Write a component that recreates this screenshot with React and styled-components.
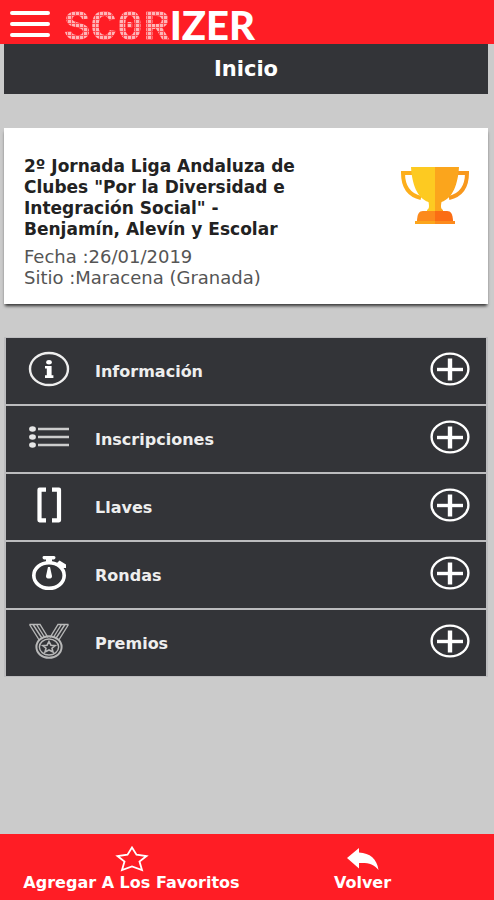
import styled, { createGlobalStyle } from "styled-components";

const menuItems = [
  { id: 1, name: "Información", icon: InfoIcon },
  { id: 2, name: "Inscripciones", icon: ListIcon },
  { id: 3, name: "Llaves", icon: BracketIcon },
  { id: 4, name: "Rondas", icon: WatchIcon },
  { id: 5, name: "Premios", icon: MedalIcon },
];

function App() {
  return (
    <Page>
      <GlobalStyle />
      <Header>
        <MenuButton type="button" aria-label="Menú">
          <svg width="40" height="28" viewBox="0 0 40 28" aria-hidden="true">
            <path
              d="M2 3H38M2 14H38M2 25H38"
              stroke="#fff"
              strokeWidth="4"
              strokeLinecap="round"
            />
          </svg>
        </MenuButton>
        <Logo>
          <LogoDots>SC0R</LogoDots>
          <LogoSolid>IZER</LogoSolid>
        </Logo>
      </Header>
      <Main>
        <Title>Inicio</Title>
        <Card>
          <div>
            <EventName>
              2º Jornada Liga Andaluza de Clubes "Por la Diversidad e
              Integración Social" - Benjamín, Alevín y Escolar
            </EventName>
            <EventInfo>Fecha :26/01/2019</EventInfo>
            <EventInfo>Sitio :Maracena (Granada)</EventInfo>
          </div>
          <TrophyIcon />
        </Card>
        <Menu>
          {menuItems.map((el) => (
            <li key={el.id}>
              <MenuRow type="button">
                <el.icon />
                <MenuName>{el.name}</MenuName>
                <PlusIcon />
              </MenuRow>
            </li>
          ))}
        </Menu>
      </Main>
      <Footer>
        <FooterButton type="button">
          <StarIcon />
          Agregar A Los Favoritos
        </FooterButton>
        <FooterButton type="button">
          <BackIcon />
          Volver
        </FooterButton>
      </Footer>
    </Page>
  );
}

function InfoIcon() {
  return (
    <svg width="42" height="36" viewBox="0 0 42 36" aria-hidden="true">
      <ellipse cx="21" cy="18" rx="19" ry="16" fill="none" stroke="#eee" strokeWidth="2.4" />
      <ellipse cx="21" cy="11.3" rx="2.8" ry="2.2" fill="#fff" />
      <path d="M17 15H23.6V24.2H25.4V27H17V24.2H18.8V17.4H17Z" fill="#fff" />
    </svg>
  );
}

function ListIcon() {
  return (
    <svg width="42" height="36" viewBox="0 0 42 36" aria-hidden="true">
      <path d="M10 10H41M10 18H41M10 26H41" stroke="#ccc" strokeWidth="2.4" />
      <g fill="#e6e6e6">
        <ellipse cx="4.5" cy="10" rx="3.4" ry="2.8" />
        <ellipse cx="4.5" cy="18" rx="3.4" ry="2.8" />
        <ellipse cx="4.5" cy="26" rx="3.4" ry="2.8" />
      </g>
    </svg>
  );
}

function BracketIcon() {
  return (
    <svg width="42" height="36" viewBox="0 0 42 36" aria-hidden="true">
      <path
        d="M18 2.7H11.5V33.3H18M24 2.7H31V33.3H24"
        fill="none"
        stroke="#fff"
        strokeWidth="4.2"
        strokeLinejoin="round"
      />
    </svg>
  );
}

function WatchIcon() {
  return (
    <svg width="42" height="36" viewBox="0 0 42 36" aria-hidden="true">
      <ellipse cx="21" cy="20.5" rx="15.2" ry="12.8" fill="none" stroke="#fff" strokeWidth="3.6" />
      <path d="M16 1H26Q27.5 1 27.5 2.6T26 4.4H24V8H18V4.4H16Q14.5 4.4 14.5 2.6T16 1Z" fill="#fff" />
      <path d="M29 8L31.5 5.5L38 9.5V13H35Z" fill="#fff" />
      <path d="M20 12H22L24 21A3 2.6 0 1 1 18 21Z" fill="#fff" />
    </svg>
  );
}

function MedalIcon() {
  return (
    <svg width="42" height="36" viewBox="0 0 42 36" aria-hidden="true">
      <g fill="none" stroke="#b8b8b8" strokeWidth="1.4">
        <path d="M1.5 1.5H12L20 14.5M1.5 1.5L11.5 17.5M5 1.5L14.5 16M8.5 1.5L17 15" />
        <path d="M40.5 1.5H30L22 14.5M40.5 1.5L30.5 17.5M37 1.5L27.5 16M33.5 1.5L25 15" />
        <ellipse cx="21" cy="24" rx="12.6" ry="10.8" strokeWidth="2" />
        <ellipse cx="21" cy="24" rx="9.6" ry="8" />
        <path
          d="M21 18.5L22.9 22.2L27.2 22.6L24 25.2L25 29L21 27L17 29L18 25.2L14.8 22.6L19.1 22.2Z"
          strokeWidth="1.6"
        />
      </g>
    </svg>
  );
}

function PlusIcon() {
  return (
    <svg width="42" height="36" viewBox="0 0 42 36" aria-hidden="true">
      <ellipse cx="21" cy="18" rx="18.4" ry="15.4" fill="none" stroke="#fff" strokeWidth="2.4" />
      <path d="M8 18.5H34" stroke="#fff" strokeWidth="3.4" />
      <path d="M21 7.5V29.5" stroke="#fff" strokeWidth="4.4" />
    </svg>
  );
}

function TrophyIcon() {
  return (
    <svg width="70" height="58" viewBox="0 0 70 58" aria-hidden="true">
      <path d="M13 7H3C3 19 8 29 21 32" fill="none" stroke="#fdaf1c" strokeWidth="4" />
      <path d="M57 7H67C67 19 62 29 49 32" fill="none" stroke="#f8981d" strokeWidth="4" />
      <path d="M11 1H35V47H27V44C29 43 29.5 41 28.5 36C17 32 12 18 11 1Z" fill="#fdca21" />
      <path d="M59 1H35V47H43V44C41 43 40.5 41 41.5 36C53 32 58 18 59 1Z" fill="#fba51c" />
      <path d="M35 45H23C19 45 17.5 48 17 54V56H35Z" fill="#fc8a1c" />
      <path d="M35 45H47C51 45 52.5 48 53 54V56H35Z" fill="#fb6d14" />
      <path d="M15 55H35V58H15Z" fill="#fba51c" />
      <path d="M35 55H55V58H35Z" fill="#fc8a1c" />
    </svg>
  );
}

function StarIcon() {
  return (
    <svg width="34" height="27" viewBox="0 0 34 27" aria-hidden="true">
      <path
        d="M17 2.5L21.5 9.7L31.5 11L24.5 16.6L27 25L17 21.4L7 25L9.5 16.6L2.5 11L12.5 9.7Z"
        fill="none"
        stroke="#fff"
        strokeWidth="1.8"
      />
    </svg>
  );
}

function BackIcon() {
  return (
    <svg width="34" height="27" viewBox="0 0 34 27" aria-hidden="true">
      <path d="M1 13L13 3V7.5C24 8 31 14 32.5 25C28 19 22 17.5 13 18V23.5Z" fill="#fff" />
    </svg>
  );
}

const GlobalStyle = createGlobalStyle`
  * {
    box-sizing: border-box;
  }
  body {
    margin: 0;
    background: #cbcbcb;
    font-family: "DejaVu Sans", Verdana, sans-serif;
  }
  button {
    border: none;
    padding: 0;
    background: none;
    color: inherit;
    font: inherit;
    cursor: pointer;
  }
  svg {
    display: block;
    flex-shrink: 0;
  }
`;

const Page = styled.div`
  display: flex;
  flex-direction: column;
  min-height: 100vh;
`;

const Header = styled.header`
  display: flex;
  align-items: center;
  gap: 14px;
  height: 44px;
  padding: 4px 10px 0;
  background: #ff1d25;
`;

const MenuButton = styled.button`
  display: flex;
`;

const Logo = styled.div`
  display: flex;
  align-items: baseline;
  padding-top: 4px;
  color: #fff;
  line-height: 40px;
`;

/* the red grid over the letters gives the led panel look */
const LogoDots = styled.span`
  font-family: "Liberation Mono", monospace;
  font-size: 44px;
  font-weight: bold;
  background: repeating-linear-gradient(
      90deg,
      transparent 0 3px,
      #ff4d53 3px 4px
    ),
    repeating-linear-gradient(#ffb4b7 0 3px, #ff4d53 3px 4px);
  background-clip: text;
  color: transparent;
`;

const LogoSolid = styled.span`
  font-family: Lato, sans-serif;
  font-size: 40px;
  font-weight: 900;
`;

const Main = styled.main`
  flex: 1;
  padding: 0 6px 24px 4px;
`;

const Title = styled.h1`
  margin: 0;
  background: #333438;
  color: #fff;
  font-size: 21px;
  line-height: 50px;
  text-align: center;
`;

const Card = styled.section`
  display: flex;
  justify-content: space-between;
  align-items: flex-start;
  gap: 16px;
  margin-top: 34px;
  padding: 28px 18px 16px 20px;
  background: #fff;
  box-shadow: 0 3px 3px -1px #333;

  & > div {
    width: 290px;
  }
  & > svg {
    margin-top: 10px;
  }
`;

const EventName = styled.h2`
  margin: 0 0 6px;
  color: #222;
  font-size: 17px;
  line-height: 21px;
`;

const EventInfo = styled.p`
  margin: 0;
  color: #555;
  font-size: 18px;
  line-height: 21px;
`;

const Menu = styled.ul`
  display: flex;
  flex-direction: column;
  gap: 2px;
  margin: 33px 0 0;
  padding: 1px 2px;
  background: #bcbcbe;
  list-style: none;
`;

const MenuRow = styled.button`
  display: flex;
  align-items: center;
  width: 100%;
  height: 66px;
  padding: 0 15px 0 22px;
  background: #333438;
  color: #eee;

  & > svg {
    margin-bottom: 4px;
  }
`;

const MenuName = styled.span`
  flex: 1;
  padding-left: 25px;
  font-size: 16px;
  font-weight: bold;
  text-align: left;
`;

const Footer = styled.footer`
  display: grid;
  grid-template-columns: 1fr 1fr;
  height: 66px;
  padding: 0 16px;
  background: #ff1d25;
  color: #fff;
`;

const FooterButton = styled.button`
  display: flex;
  flex-direction: column;
  align-items: center;
  padding-top: 11px;
  font-size: 16px;
  font-weight: bold;
  line-height: 21px;
`;

export default App;
